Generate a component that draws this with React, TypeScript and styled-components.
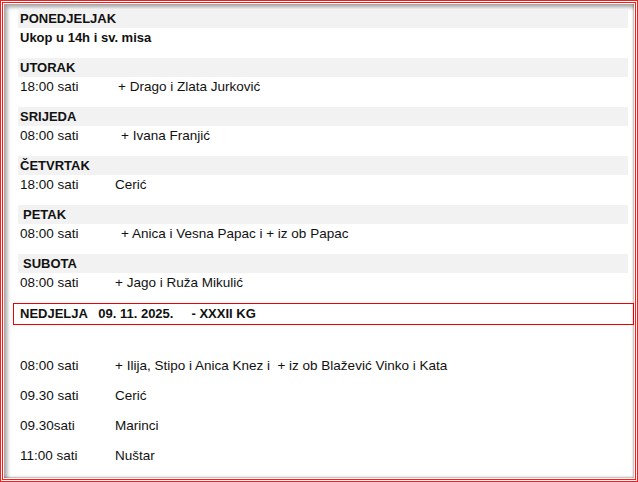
import styled, { createGlobalStyle } from 'styled-components';

const GlobalStyle = createGlobalStyle`
  html, body {
    margin: 0;
    padding: 0;
    background: #fff;
  }
  body {
    font-family: 'Liberation Sans', Arial, sans-serif;
    color: #111;
  }
`;

const Frame = styled.div`
  width: 638px;
  height: 482px;
  box-sizing: border-box;
  border: 3px double #ff1a1a;
  padding: 1px;
  display: flex;
`;

const Panel = styled.div`
  flex: 1;
  box-sizing: border-box;
  padding: 5px 6px 0 14px;
  box-shadow: inset 4px 4px 4px -1px rgba(0, 0, 0, 0.38),
    inset -2px -2px 2px -1px rgba(0, 0, 0, 0.3);
  display: flex;
  flex-direction: column;
`;

const Day = styled.section`
  display: flex;
  flex-direction: column;
  margin-bottom: 11px;
`;

const DayTitle = styled.div<{ $indent?: number }>`
  background: #f2f2f2;
  height: 19px;
  line-height: 20px;
  padding-left: ${(p) => 2 + (p.$indent ?? 0)}px;
  font-weight: 700;
  font-size: 13px;
`;

const Row = styled.div<{ $tall?: boolean }>`
  display: flex;
  align-items: center;
  height: ${(p) => (p.$tall ? 30 : 19)}px;
  padding-left: 2px;
  font-size: 13.5px;
  white-space: pre;
`;

const Note = styled.div`
  height: 19px;
  line-height: 19px;
  padding-left: 2px;
  font-size: 13px;
  font-weight: 700;
`;

const Time = styled.span<{ $w?: number }>`
  width: ${(p) => p.$w ?? 95}px;
  flex: none;
`;

const SundayBox = styled.div`
  margin: 0 -6px 25px -5px;
  height: 22px;
  box-sizing: border-box;
  border: 1px solid #e00;
  padding-left: 6px;
  font-weight: 700;
  font-size: 13px;
  line-height: 20px;
  white-space: pre;
`;

const week = [
  { day: 'UTORAK', time: '18:00 sati', name: '+ Drago i Zlata Jurković', w: 98 },
  { day: 'SRIJEDA', time: '08:00 sati', name: '+ Ivana Franjić', w: 101 },
  { day: 'ČETVRTAK', time: '18:00 sati', name: 'Cerić', w: 95 },
  { day: 'PETAK', time: '08:00 sati', name: '+ Anica i Vesna Papac i + iz ob Papac', w: 101, indent: 3 },
  { day: 'SUBOTA', time: '08:00 sati', name: '+ Jago i Ruža Mikulić', w: 95, indent: 3 },
];

const sunday = [
  { time: '08:00 sati', name: '+ Ilija, Stipo i Anica Knez i  + iz ob Blažević Vinko i Kata' },
  { time: '09.30 sati', name: 'Cerić' },
  { time: '09.30sati', name: 'Marinci' },
  { time: '11:00 sati', name: 'Nuštar' },
];

function App() {
  return (
    <>
      <GlobalStyle />
      <Frame>
        <Panel>
          <Day>
            <DayTitle>PONEDJELJAK</DayTitle>
            <Note>Ukop u 14h i sv. misa</Note>
          </Day>
          {week.map((d) => (
            <Day key={d.day}>
              <DayTitle $indent={d.indent}>{d.day}</DayTitle>
              <Row>
                <Time $w={d.w}>{d.time}</Time>
                <span>{d.name}</span>
              </Row>
            </Day>
          ))}
          <SundayBox>{'NEDJELJA   09. 11. 2025.     - XXXII KG'}</SundayBox>
          {sunday.map((s) => (
            <Row $tall key={s.time + s.name}>
              <Time>{s.time}</Time>
              <span>{s.name}</span>
            </Row>
          ))}
        </Panel>
      </Frame>
    </>
  );
}

export default App;
